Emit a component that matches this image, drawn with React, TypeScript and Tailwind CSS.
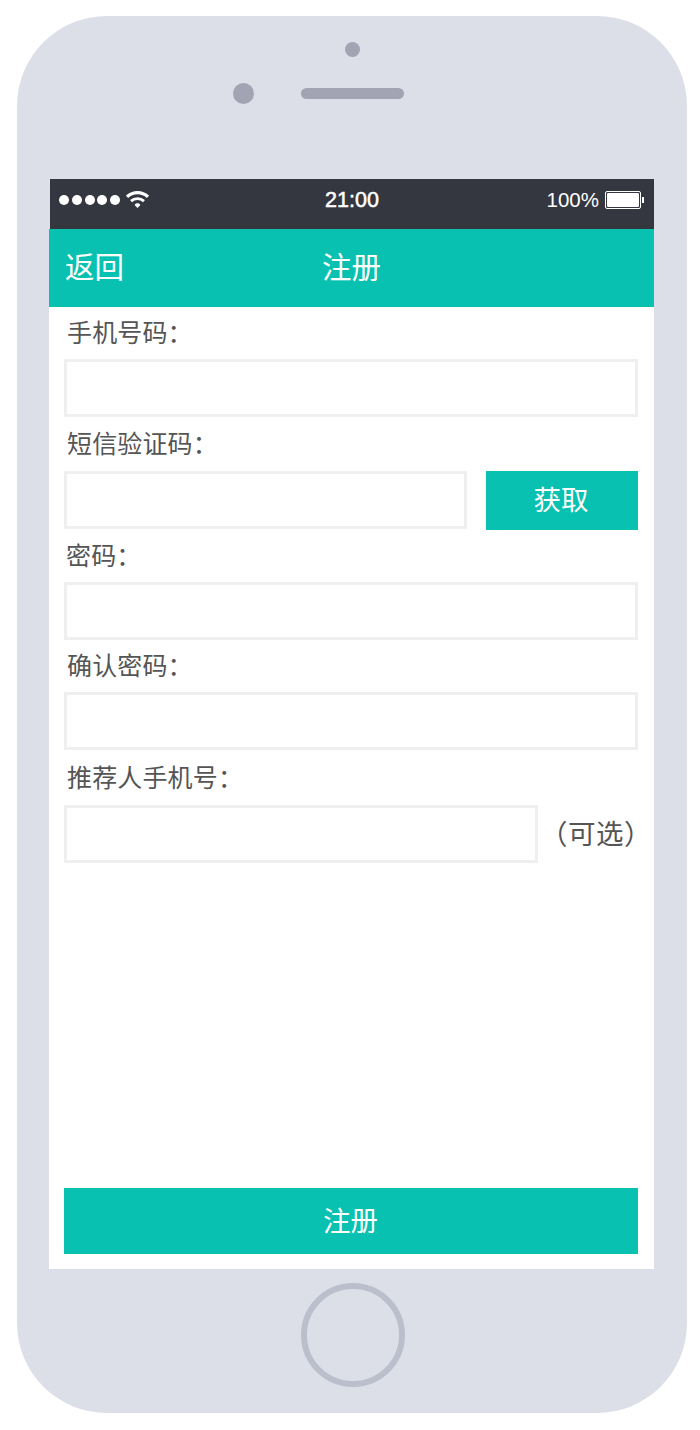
import React from "react";

interface IFieldProps {
    label: string;
    labelClass: string;
    inputClass?: string;
    children?: React.ReactNode;
}

const Field = ({ label, labelClass, inputClass = "flex-1", children }: IFieldProps) => {
    return <div>
        <label className={`flex items-center pt-px text-[25px] tracking-[0.15px] leading-none text-[#555555] whitespace-nowrap ${labelClass}`}>{label}</label>
        <div className="flex items-center h-[58px]">
            <input aria-label={label} className={`h-[58px] min-w-0 border-[3px] border-[#efefef] bg-white outline-none ${inputClass}`} />
            {children}
        </div>
    </div>
}

const Wifi = () => {
    return <svg className="ml-[6px] mb-[3px]" width="23" height="18" viewBox="0 0 23 18" fill="none" stroke="white">
        <path d="M1 6.8C7 1.2 16 1.2 22 6.8" strokeWidth="3.4" />
        <path d="M5 11.2C8.8 7.8 14.2 7.8 18 11.2" strokeWidth="2.9" />
        <path d="M11.5 18L8.6 15C9.6 12.8 13.4 12.8 14.4 15Z" fill="white" stroke="none" />
    </svg>
}

const Battery = () => {
    return <div className="flex items-center ml-[6px]">
        <div className="w-9 h-[18px] p-px border border-white rounded-[2px]">
            <div className="h-full bg-white rounded-[1px]"></div>
        </div>
        <div className="w-[2px] h-[6px] ml-px bg-white"></div>
    </div>
}

const StatusBar = () => {
    return <div className="grid grid-cols-[1fr_auto_1fr] items-center h-[50px] ml-px pl-[9px] pr-[10px] pb-[8px] bg-[#353740] text-white font-['Liberation_Sans',sans-serif]">
        <div className="flex items-center">
            <div className="flex gap-[2.8px]">
                {[1, 2, 3, 4, 5].map((n) => <div key={n} className="size-[10px] rounded-full bg-white"></div>)}
            </div>
            <Wifi />
        </div>
        <div className="pt-px pl-px text-[21.5px] leading-none [-webkit-text-stroke:0.5px_white]">21:00</div>
        <div className="flex items-center justify-end text-[20.5px] leading-none">
            <span className="pt-px">100%</span>
            <Battery />
        </div>
    </div>
}

const NavBar = () => {
    return <div className="grid grid-cols-3 items-center h-[78px] px-4 bg-[#08c1b1] text-white text-[29.5px] leading-none">
        <button className="text-left">返回</button>
        <h1 className="text-center">注册</h1>
    </div>
}

export default function App() {
    return <div className="h-[1430px] w-[700px] bg-white pt-4 pl-[17px] font-['Liberation_Sans','Noto_Sans_CJK_SC',sans-serif]">
        <div className="flex flex-col items-center w-[670px] h-[1397px] rounded-[90px] bg-[#dcdfe7]">
            <div className="flex flex-col items-center h-[163px] shrink-0 pt-[26px]">
                <div className="size-[15px] rounded-full bg-[#a2a4b3]"></div>
                <div className="flex items-center gap-[47px] mt-[26px] mr-[68px]">
                    <div className="size-[21px] rounded-full bg-[#a2a4b3]"></div>
                    <div className="w-[103px] h-[11px] rounded-full bg-[#a2a4b3]"></div>
                </div>
            </div>
            <div className="flex flex-col w-[605px] h-[1090px] shrink-0 mr-[1px]">
                <StatusBar />
                <NavBar />
                <form className="flex flex-1 flex-col bg-white pl-[15px] pr-4 pb-[15px]" onSubmit={(e) => e.preventDefault()}>
                    <Field label="手机号码：" labelClass="h-[52px] pl-[3px]" />
                    <Field label="短信验证码：" labelClass="h-[54px] pl-[3px]" inputClass="w-[403px]">
                        <button className="ml-auto w-[152px] h-[59px] pt-[2px] pr-[2px] bg-[#08c1b1] text-white text-[27.5px] leading-none">获取</button>
                    </Field>
                    <Field label="密码：" labelClass="h-[53px] pl-[2px]" />
                    <Field label="确认密码：" labelClass="h-[52px] pl-[3px]" />
                    <Field label="推荐人手机号：" labelClass="h-[55px] pl-[3px]" inputClass="w-[474px] shrink-0">
                        <span className="ml-[2px] pt-px text-[27.5px] tracking-[0.5px] leading-none text-[#555555] whitespace-nowrap">（可选）</span>
                    </Field>
                    <button className="mt-auto h-[66px] pt-[2px] pr-px bg-[#08c1b1] text-white text-[27.5px] leading-none">注册</button>
                </form>
            </div>
            <div className="size-[104px] mt-[14px] ml-[2px] shrink-0 rounded-full border-[6px] border-[#bbbecb]"></div>
        </div>
    </div>
}
